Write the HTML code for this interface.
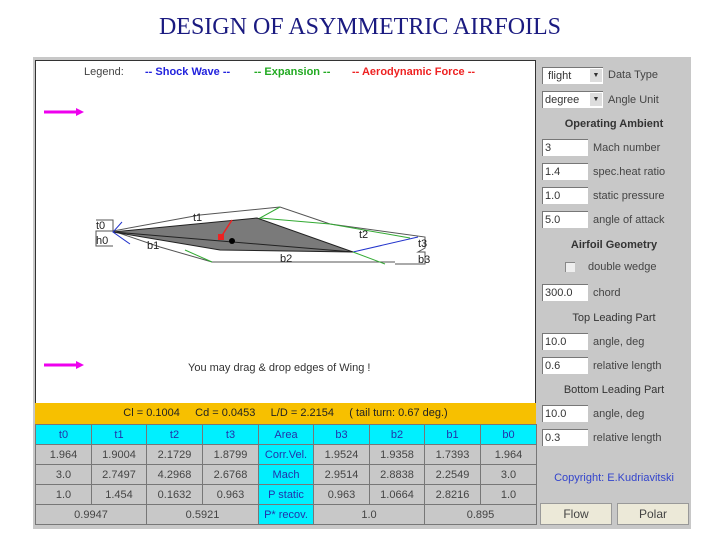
<!DOCTYPE html>
<html><head><style>
body{margin:0;width:720px;height:540px;background:#fff;position:relative;overflow:hidden;font-family:"Liberation Sans",sans-serif}
.a{position:absolute}
h1{position:absolute;top:14px;left:0;width:720px;text-align:center;margin:0;font:24px "Liberation Serif",serif;color:#1a1a80}
.frame{left:33px;top:57px;width:658px;height:472px;background:#c8c8c8}
.cv{left:35px;top:60px;width:499px;height:342px;background:#fff;border:1px solid #333}
.yb{left:35px;top:403px;width:501px;height:21px;background:#f7c000;font-size:11px;color:#222;text-align:center;line-height:21px}
table{position:absolute;left:35px;top:424px;border-collapse:collapse;width:501px;font-size:11px;color:#444;table-layout:fixed}
td{border:1px solid #777;height:19px;text-align:center;padding:0;background:#c8c8c8;overflow:hidden;white-space:nowrap}
td.c{background:#00f0ff;color:#2233aa}
.in{position:absolute;left:542px;width:46px;height:17px;background:#fff;border-top:1px solid #777;border-left:1px solid #777;font-size:11px;color:#333;line-height:17px;padding-left:2px;box-sizing:border-box}
.dd{width:61px}
.dd span{position:absolute;right:1px;top:1px;width:12px;height:13px;background:#ddd;font-size:7px;text-align:center;line-height:13px}
.lb{position:absolute;left:593px;font-size:11px;color:#444}
.hd{position:absolute;left:540px;width:148px;text-align:center;font-size:11px;color:#333}
.btn{position:absolute;top:503px;height:20px;width:70px;background:#ece9d8;border:1px solid #999;font-size:12px;text-align:center;line-height:20px;color:#444}
</style></head><body>
<h1>DESIGN OF ASYMMETRIC AIRFOILS</h1>
<div class="a frame"></div>
<div class="a cv"></div>
<div class="a" style="left:84px;top:66px;font-size:11px;color:#444">Legend:</div>
<div class="a" style="left:145px;top:66px;font-size:11px;color:#2222dd;font-weight:bold">-- Shock Wave --</div>
<div class="a" style="left:254px;top:66px;font-size:11px;color:#22aa22;font-weight:bold">-- Expansion --</div>
<div class="a" style="left:352px;top:66px;font-size:11px;color:#ee2222;font-weight:bold">-- Aerodynamic Force --</div>
<div class="a" style="left:188px;top:362px;font-size:11px;color:#333">You may drag &amp; drop edges of Wing !</div>
<svg class="a" style="left:0;top:0" width="540" height="400">
<g stroke="#ee00ee" stroke-width="3" fill="#ee00ee"><line x1="44" y1="112" x2="76" y2="112"/><polygon points="76,108 84,112 76,116" stroke="none"/>
<line x1="44" y1="365" x2="76" y2="365"/><polygon points="76,361 84,365 76,369" stroke="none"/></g>
<g fill="none" stroke="#555" stroke-width="1">
<polyline points="96,220 113,220 113,231 96,231 96,246 113,246"/>
<polyline points="113,231 200,215 280,207 330,224 425,237 425,248 418,252 425,252 425,264 395,264"/>
<polyline points="113,231 160,247 212,262 395,262"/>
</g>
<polygon points="113,232 257,218 353,252 220,250" fill="#7a7a7a" stroke="#222"/>
<line x1="113" y1="232" x2="353" y2="252" stroke="#222"/>
<g fill="none" stroke="#2233cc" stroke-width="1"><polyline points="122,222 113,232 130,244"/><polyline points="418,237 353,252"/></g>
<g fill="none" stroke="#33aa33" stroke-width="1"><polyline points="280,207 260,218 330,224 410,238"/><polyline points="185,250 212,262"/><polyline points="353,252 385,264"/></g>
<line x1="221" y1="237" x2="232" y2="220" stroke="#ee2222" stroke-width="1.5"/>
<rect x="218" y="234" width="6" height="6" fill="#ee2222"/>
<circle cx="232" cy="241" r="3" fill="#000"/>
<g font-size="11" fill="#222" font-family="Liberation Sans"><text x="96" y="229">t0</text><text x="96" y="244">h0</text><text x="193" y="221">t1</text><text x="147" y="249">b1</text><text x="359" y="238">t2</text><text x="280" y="262">b2</text><text x="418" y="247">t3</text><text x="418" y="263">b3</text></g>
</svg>
<div class="a yb">Cl = 0.1004 &nbsp;&nbsp;&nbsp; Cd = 0.0453 &nbsp;&nbsp;&nbsp; L/D = 2.2154 &nbsp;&nbsp;&nbsp; ( tail turn: 0.67 deg.)</div>
<table>
<colgroup><col style="width:56px"><col style="width:55px"><col style="width:56px"><col style="width:56px"><col style="width:55px"><col style="width:56px"><col style="width:55px"><col style="width:56px"><col style="width:56px"></colgroup>
<tr><td class="c">t0</td><td class="c">t1</td><td class="c">t2</td><td class="c">t3</td><td class="c">Area</td><td class="c">b3</td><td class="c">b2</td><td class="c">b1</td><td class="c">b0</td></tr>
<tr><td>1.964</td><td>1.9004</td><td>2.1729</td><td>1.8799</td><td class="c">Corr.Vel.</td><td>1.9524</td><td>1.9358</td><td>1.7393</td><td>1.964</td></tr>
<tr><td>3.0</td><td>2.7497</td><td>4.2968</td><td>2.6768</td><td class="c">Mach</td><td>2.9514</td><td>2.8838</td><td>2.2549</td><td>3.0</td></tr>
<tr><td>1.0</td><td>1.454</td><td>0.1632</td><td>0.963</td><td class="c">P static</td><td>0.963</td><td>1.0664</td><td>2.8216</td><td>1.0</td></tr>
<tr><td colspan="2">0.9947</td><td colspan="2">0.5921</td><td class="c">P* recov.</td><td colspan="2">1.0</td><td colspan="2">0.895</td></tr>
</table>
<div class="in dd" style="top:67px">&nbsp;flight<span>▼</span></div>
<div class="lb" style="left:608px;top:69px">Data Type</div>
<div class="in dd" style="top:91px">degree<span>▼</span></div>
<div class="lb" style="left:608px;top:94px">Angle Unit</div>
<div class="hd" style="top:118px;font-weight:bold">Operating Ambient</div>
<div class="in" style="top:139px">3</div><div class="lb" style="top:142px">Mach number</div>
<div class="in" style="top:163px">1.4</div><div class="lb" style="top:166px">spec.heat ratio</div>
<div class="in" style="top:187px">1.0</div><div class="lb" style="top:190px">static pressure</div>
<div class="in" style="top:211px">5.0</div><div class="lb" style="top:214px">angle of attack</div>
<div class="hd" style="top:239px;font-weight:bold">Airfoil Geometry</div>
<div class="a" style="left:565px;top:262px;width:9px;height:9px;background:#eee;border-top:1px solid #888;border-left:1px solid #888"></div>
<div class="lb" style="left:588px;top:261px">double wedge</div>
<div class="in" style="top:284px">300.0</div><div class="lb" style="top:287px">chord</div>
<div class="hd" style="top:312px">Top Leading Part</div>
<div class="in" style="top:333px">10.0</div><div class="lb" style="top:336px">angle, deg</div>
<div class="in" style="top:357px">0.6</div><div class="lb" style="top:360px">relative length</div>
<div class="hd" style="top:384px">Bottom Leading Part</div>
<div class="in" style="top:405px">10.0</div><div class="lb" style="top:408px">angle, deg</div>
<div class="in" style="top:429px">0.3</div><div class="lb" style="top:432px">relative length</div>
<div class="hd" style="top:472px;color:#3344cc">Copyright: E.Kudriavitski</div>
<div class="btn" style="left:540px">Flow</div>
<div class="btn" style="left:617px">Polar</div>
</body></html>
